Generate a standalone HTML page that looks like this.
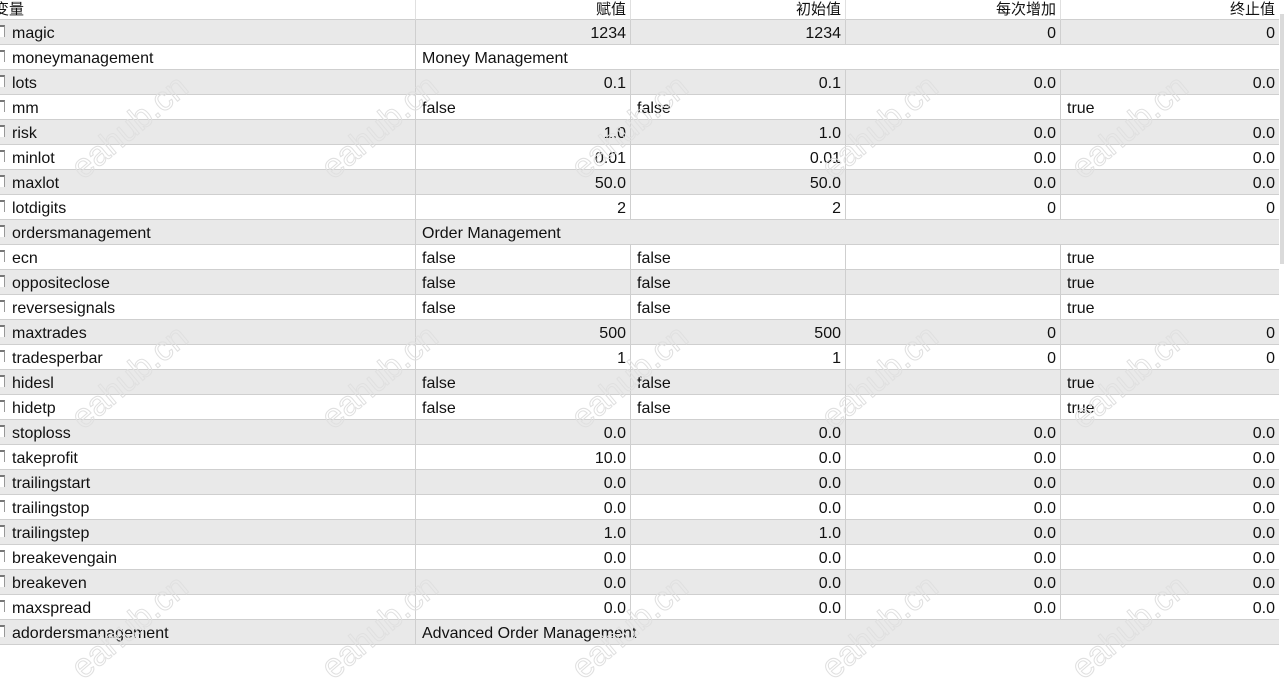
<!DOCTYPE html>
<html><head><meta charset="utf-8"><style>
*{margin:0;padding:0;box-sizing:border-box}
body{width:1284px;height:643px;overflow:hidden;background:#fff;font-family:"Liberation Sans","Noto Sans CJK SC",sans-serif;font-size:16px;color:#111;position:relative}
.r{position:absolute;left:0;width:1279px;height:25px;border-bottom:1px solid #cfcfcf}
.g{background:#e9e9e9}
.c{position:absolute;top:0;height:24px;line-height:27px;white-space:nowrap;overflow:hidden}
.c1{left:0;width:415px;padding-left:12px}
.c2{left:415px;width:215px;border-left:1px solid #cfcfcf}
.c3{left:630px;width:215px;border-left:1px solid #cfcfcf}
.c4{left:845px;width:215px;border-left:1px solid #cfcfcf}
.c5{left:1060px;width:219px;border-left:1px solid #cfcfcf}
.rt{text-align:right;padding-right:4px}
.lt{padding-left:6px}
.cb{position:absolute;left:0;top:5px;width:5px;height:12px;border-top:2px solid #777;border-right:1px solid #999;background:#fff}
.h{position:absolute;top:0;height:20px;line-height:18px;border-bottom:1px solid #cfcfcf;background:#fff;font-family:"Noto Sans CJK SC",sans-serif;font-size:15px}
.wm{position:absolute;font-size:34px;font-family:"Liberation Sans",sans-serif;color:transparent;-webkit-text-stroke:1px #e0e0e0;transform:rotate(-40deg);white-space:nowrap;pointer-events:none}
.sb{position:absolute;left:1279px;top:0;width:5px;height:643px;background:#fff}
.sbt{position:absolute;left:1280px;top:14px;width:4px;height:250px;background:#dadada}
</style></head><body>
<div class="h" style="left:0;width:1279px"></div>
<div class="h" style="left:-6px;width:200px;border:none;background:transparent">变量</div>
<div class="h rt" style="left:415px;width:215px;border-left:1px solid #e0e0e0">赋值</div>
<div class="h rt" style="left:630px;width:215px;border-left:1px solid #e0e0e0">初始值</div>
<div class="h rt" style="left:845px;width:215px;border-left:1px solid #e0e0e0">每次增加</div>
<div class="h rt" style="left:1060px;width:219px;border-left:1px solid #e0e0e0">终止值</div>
<div id="rows"></div>
<script>
var d=[
["magic","1234","1234","0","0",0],
["moneymanagement","Money Management",null],
["lots","0.1","0.1","0.0","0.0",0],
["mm","false","false","","true",1],
["risk","1.0","1.0","0.0","0.0",0],
["minlot","0.01","0.01","0.0","0.0",0],
["maxlot","50.0","50.0","0.0","0.0",0],
["lotdigits","2","2","0","0",0],
["ordersmanagement","Order Management",null],
["ecn","false","false","","true",1],
["oppositeclose","false","false","","true",1],
["reversesignals","false","false","","true",1],
["maxtrades","500","500","0","0",0],
["tradesperbar","1","1","0","0",0],
["hidesl","false","false","","true",1],
["hidetp","false","false","","true",1],
["stoploss","0.0","0.0","0.0","0.0",0],
["takeprofit","10.0","0.0","0.0","0.0",0],
["trailingstart","0.0","0.0","0.0","0.0",0],
["trailingstop","0.0","0.0","0.0","0.0",0],
["trailingstep","1.0","1.0","0.0","0.0",0],
["breakevengain","0.0","0.0","0.0","0.0",0],
["breakeven","0.0","0.0","0.0","0.0",0],
["maxspread","0.0","0.0","0.0","0.0",0],
["adordersmanagement","Advanced Order Management",null]];
var h="";
d.forEach(function(r,i){
 h+='<div class="r'+(i%2==0?' g':'')+'" style="top:'+(20+i*25)+'px"><div class="cb"></div><div class="c c1">'+r[0]+'</div>';
 if(r[2]===null){h+='<div class="c lt" style="left:415px;width:864px;border-left:1px solid #cfcfcf">'+r[1]+'</div>';}
 else{var cl=r[5]?'lt':'rt';
  h+='<div class="c c2 '+cl+'">'+r[1]+'</div><div class="c c3 '+cl+'">'+r[2]+'</div><div class="c c4 '+cl+'">'+r[3]+'</div><div class="c c5 '+cl+'">'+r[4]+'</div>';}
 h+='</div>';});
var ys=[128,378,628];
ys.forEach(function(y){for(var k=0;k<5;k++){var x=130+k*250;h+='<div class="wm" style="left:'+(x-70)+'px;top:'+(y-20)+'px">eahub.cn</div>';}});
document.getElementById("rows").innerHTML=h;
</script>
<div class="sb"></div><div class="sbt"></div>
</body></html>
